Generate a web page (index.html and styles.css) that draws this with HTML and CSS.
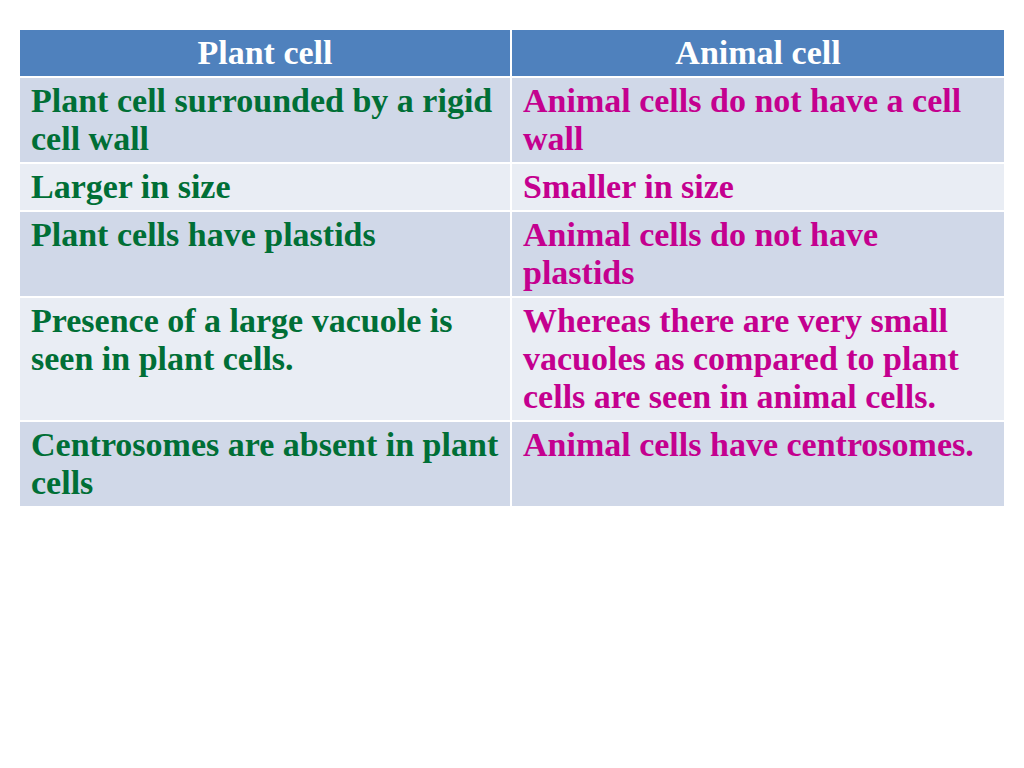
FILE: index.html
```html
<!DOCTYPE html>
<html>
<head>
<meta charset="utf-8">
<link rel="stylesheet" href="styles.css">
</head>
<body>
<div class="table">
  <div class="cell head">Plant cell</div>
  <div class="cell head">Animal cell</div>

  <div class="cell odd plant">Plant cell surrounded by a rigid cell wall</div>
  <div class="cell odd animal">Animal cells do not have a cell wall</div>

  <div class="cell even plant">Larger in size</div>
  <div class="cell even animal">Smaller in size</div>

  <div class="cell odd plant">Plant cells have plastids</div>
  <div class="cell odd animal">Animal cells do not have plastids</div>

  <div class="cell even plant">Presence of a large vacuole is seen in plant cells.</div>
  <div class="cell even animal">Whereas there are very small vacuoles as compared to plant cells are seen in animal cells.</div>

  <div class="cell odd plant">Centrosomes are absent in plant cells</div>
  <div class="cell odd animal">Animal cells have centrosomes.</div>
</div>
</body>
</html>
```

FILE: styles.css
```css
html, body {
  margin: 0;
  padding: 0;
  background: #ffffff;
}
body {
  padding: 30px 20px;
  font-family: "Liberation Serif";
}
.table {
  display: grid;
  grid-template-columns: 490px 492px;
  column-gap: 2px;
  row-gap: 2px;
  width: 984px;
  font-family: "Liberation Serif";
}
.cell {
  font-family: "Liberation Serif";
  font-weight: bold;
  font-size: 34px;
  line-height: 38px;
  padding: 4px 11px 4px 11px;
}
.head {
  background: #4f81bd;
  color: #ffffff;
  text-align: center;
  height: 38px;
}
.odd {
  background: #d0d8e8;
}
.even {
  background: #e9edf4;
}
.plant {
  color: #006f36;
}
.animal {
  color: #c4008f;
}
```
